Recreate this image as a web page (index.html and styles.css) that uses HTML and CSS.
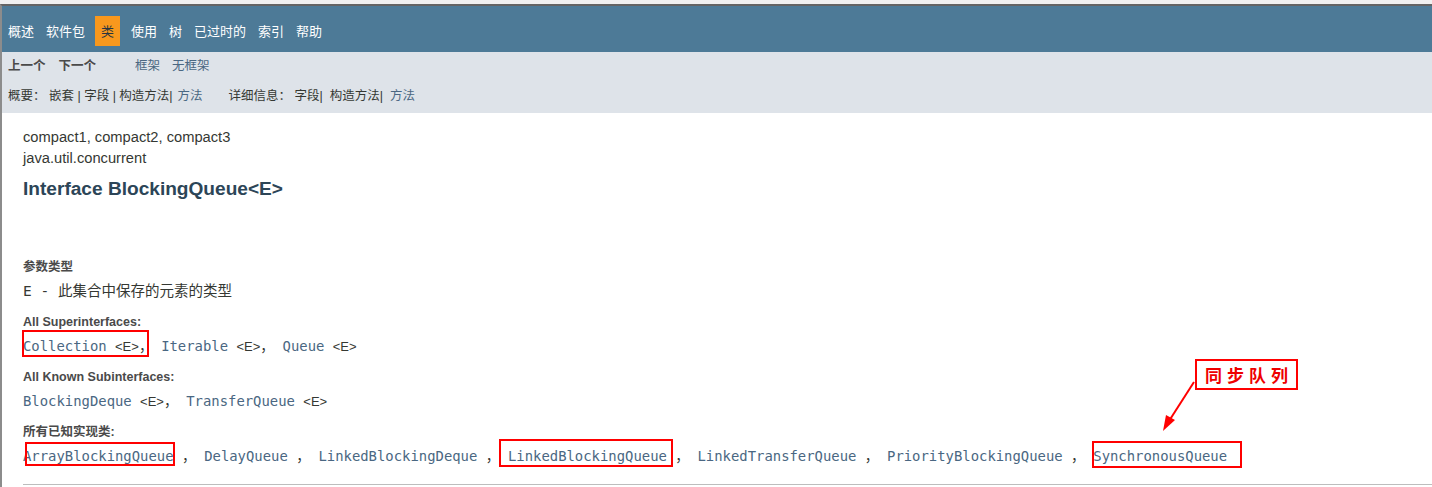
FILE: index.html
```html
<!DOCTYPE html>
<html lang="zh">
<head>
<meta charset="utf-8">
<title>BlockingQueue</title>
<link rel="stylesheet" href="styles.css">
</head>
<body>
<div class="page">
  <div class="topnav">
    <ul class="navlist">
      <li>概述</li>
      <li>软件包</li>
      <li class="current">类</li>
      <li>使用</li>
      <li>树</li>
      <li>已过时的</li>
      <li>索引</li>
      <li>帮助</li>
    </ul>
  </div>
  <div class="subnav">
    <div class="subrow">
      <span class="dis">上一个</span>
      <span class="dis next">下一个</span>
      <a class="lnk frames">框架</a>
      <a class="lnk noframes">无框架</a>
    </div>
    <div class="subrow row2">
      <span class="grp">概要：&nbsp;嵌套 | 字段 | 构造方法| <a class="lnk nudge">方法</a></span>
      <span class="grp detail">详细信息：&nbsp;字段|  构造方法|  <a class="lnk">方法</a></span>
    </div>
  </div>
  <div class="content">
    <div class="line">compact1, compact2, compact3</div>
    <div class="line">java.util.concurrent</div>
    <h2 class="title">Interface BlockingQueue&lt;E&gt;</h2>
    <div class="label param-label">参数类型</div>
    <div class="param">E - 此集合中保存的元素的类型</div>
    <div class="label first">All Superinterfaces:</div>
    <div class="links"><a class="lnk">Collection</a> <span class="gen">&lt;E&gt;</span>， <a class="lnk">Iterable</a> <span class="gen">&lt;E&gt;</span>， <a class="lnk">Queue</a> <span class="gen">&lt;E&gt;</span></div>
    <div class="label">All Known Subinterfaces:</div>
    <div class="links"><a class="lnk">BlockingDeque</a> <span class="gen">&lt;E&gt;</span>， <a class="lnk">TransferQueue</a> <span class="gen">&lt;E&gt;</span></div>
    <div class="label">所有已知实现类:</div>
    <div class="links"><a class="lnk">ArrayBlockingQueue</a> ， <a class="lnk">DelayQueue</a> ， <a class="lnk">LinkedBlockingDeque</a> ， <a class="lnk">LinkedBlockingQueue</a> ， <a class="lnk">LinkedTransferQueue</a> ， <a class="lnk">PriorityBlockingQueue</a> ， <a class="lnk">SynchronousQueue</a></div>
    <div class="rule"></div>
  </div>

  <svg class="marks" width="1432" height="487" viewBox="0 0 1432 487" xmlns="http://www.w3.org/2000/svg">
    <g fill="none" stroke="#f00" stroke-width="2">
      <rect x="23" y="331" width="125" height="25"/>
      <rect x="26" y="443" width="148" height="22"/>
      <rect x="500" y="440" width="172" height="26"/>
      <rect x="1093" y="442" width="148" height="25"/>
      <line x1="1194" y1="382" x2="1169" y2="421"/>
    </g>
    <polygon points="1163,431 1175,420 1166,415" fill="#f00"/>
  </svg>
  <div class="callout">同步队列</div>
</div>
</body>
</html>
```

FILE: styles.css
```css
html, body {
  margin: 0;
  padding: 0;
}
body {
  background: #f0f0f0;
  position: relative;
  width: 1432px;
  height: 487px;
  overflow: hidden;
  font-family: "Liberation Sans", Arial, "Noto Sans CJK SC", sans-serif;
}
.page {
  margin-top: 4px;
  border-top: 2px solid #646464;
  border-left: 2px solid #8c8c8c;
  background: #fff;
  height: 481px;
}
.topnav {
  background: #4d7a97;
  height: 46px;
  box-sizing: border-box;
  padding-top: 10px;
}
.navlist {
  list-style: none;
  margin: 0;
  padding: 0;
  display: flex;
}
.navlist li {
  padding: 0 6px;
  line-height: 29px;
  height: 30px;
  font-size: 13px;
  color: #fff;
  font-family: "Noto Sans CJK SC", sans-serif;
}
.navlist li.current {
  background: #f8981d;
  color: #253441;
  margin-left: 4px;
  margin-right: 5px;
}
.subnav {
  background: #dee3e9;
  height: 61px;
  box-sizing: border-box;
  padding: 4px 0 0 6px;
  font-family: "Liberation Sans", "Noto Sans CJK SC", sans-serif;
  font-size: 12.5px;
  color: #353833;
}
.subrow {
  display: flex;
  align-items: center;
  height: 20px;
  line-height: 20px;
}
.row2 {
  margin-top: 10px;
}
.dis {
  font-weight: 700;
  color: #4a4a4a;
}
.next {
  margin-left: 13px;
}
.lnk {
  color: #4a6782;
  text-decoration: none;
}
.nudge {
  margin-left: 1.5px;
}
.frames {
  margin-left: 39px;
}
.noframes {
  margin-left: 12px;
}
.grp {
  white-space: pre;
}
.detail {
  margin-left: 26px;
}
.content {
  padding-left: 21px;
  color: #353833;
}
.line {
  font-size: 14.7px;
  line-height: 21px;
}
.content .line:first-child {
  padding-top: 14px;
}
.title {
  margin: 8px 0 0 0;
  font-size: 19.1px;
  line-height: 24px;
  font-weight: 700;
  color: #2c4557;
}
.label {
  font-size: 12.5px;
  line-height: 18px;
  font-weight: 700;
  color: #4a4a4a;
  margin-top: 11px;
  font-family: "Liberation Sans", Arial, "Noto Sans CJK SC", sans-serif;
}
.param-label {
  margin-top: 56px;
  font-family: "Noto Sans CJK SC", sans-serif;
}
.label.first {
  margin-top: 13px;
}
.param {
  margin-top: 7px;
  font-family: "DejaVu Sans Mono", "Noto Sans CJK SC", monospace;
  font-size: 14.5px;
  line-height: 18px;
  color: #353833;
}
.links {
  margin-top: 5px;
  font-family: "DejaVu Sans Mono", "Noto Sans CJK SC", monospace;
  font-size: 13.9px;
  line-height: 20px;
  white-space: pre;
  color: #353833;
}
.gen {
  font-family: "Liberation Sans", Arial, sans-serif;
  font-size: 13px;
}
.rule {
  margin-top: 18px;
  border-top: 1px solid #bdbdbd;
}
.marks {
  position: absolute;
  left: 0;
  top: 0;
  pointer-events: none;
}
.callout {
  position: absolute;
  left: 1195px;
  top: 359px;
  width: 103px;
  height: 31px;
  box-sizing: border-box;
  border: 2px solid #f00;
  color: #e00;
  font-family: "Noto Sans CJK SC", sans-serif;
  font-weight: 700;
  font-size: 17px;
  letter-spacing: 5px;
  line-height: 27px;
  padding-left: 8px;
}
```
